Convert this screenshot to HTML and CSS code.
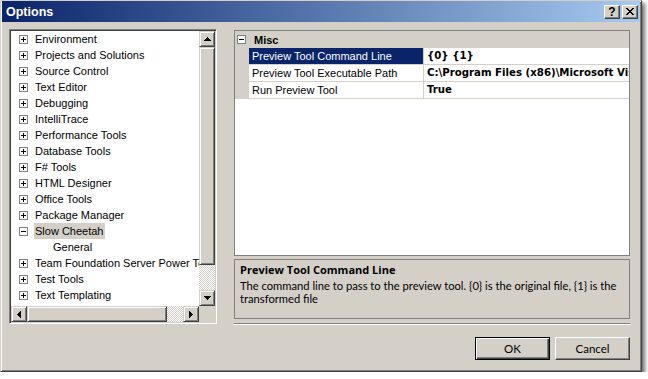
FILE: index.html
```html
<!DOCTYPE html>
<html>
<head>
<meta charset="utf-8">
<link rel="stylesheet" href="styles.css">
</head>
<body>
<div class="window">
  <div class="titlebar">
    <span class="title">Options</span>
    <div class="tbtns">
      <span class="tbtn help">?</span>
      <span class="tbtn close"><svg width="8" height="7" viewBox="0 0 8 7"><path d="M0 0h2v1h1v1h2v-1h1v-1h2v1h-1v1h-1v1h-1v1h1v1h1v1h1v1h-2v-1h-1v-1h-2v1h-1v1h-2v-1h1v-1h1v-1h1v-1h-1v-1h-1v-1h-1z" fill="#000"/></svg></span>
    </div>
  </div>
  <div class="body">
    <div class="tree">
      <div class="tree-main">
        <div class="items">
          <div class="item"><span class="pm plus"></span><span class="lbl">Environment</span></div>
          <div class="item"><span class="pm plus"></span><span class="lbl">Projects and Solutions</span></div>
          <div class="item"><span class="pm plus"></span><span class="lbl">Source Control</span></div>
          <div class="item"><span class="pm plus"></span><span class="lbl">Text Editor</span></div>
          <div class="item"><span class="pm plus"></span><span class="lbl">Debugging</span></div>
          <div class="item"><span class="pm plus"></span><span class="lbl">IntelliTrace</span></div>
          <div class="item"><span class="pm plus"></span><span class="lbl">Performance Tools</span></div>
          <div class="item"><span class="pm plus"></span><span class="lbl">Database Tools</span></div>
          <div class="item"><span class="pm plus"></span><span class="lbl">F# Tools</span></div>
          <div class="item"><span class="pm plus"></span><span class="lbl">HTML Designer</span></div>
          <div class="item"><span class="pm plus"></span><span class="lbl">Office Tools</span></div>
          <div class="item"><span class="pm plus"></span><span class="lbl">Package Manager</span></div>
          <div class="item"><span class="pm minus"></span><span class="lbl sel">Slow Cheetah</span></div>
          <div class="item child"><span class="lbl">General</span></div>
          <div class="item"><span class="pm plus"></span><span class="lbl">Team Foundation Server Power Tools</span></div>
          <div class="item"><span class="pm plus"></span><span class="lbl">Test Tools</span></div>
          <div class="item"><span class="pm plus"></span><span class="lbl">Text Templating</span></div>
          <div class="item"><span class="pm plus"></span><span class="lbl">Windows Forms Designer</span></div>
        </div>
        <div class="vscroll">
          <span class="sbtn"><svg width="7" height="4" viewBox="0 0 7 4"><path d="M3 0h1v1h1v1h1v1h1v1h-7v-1h1v-1h1v-1h1z" fill="#000"/></svg></span>
          <span class="vthumb"></span>
          <span class="vtrack"></span>
          <span class="sbtn"><svg width="7" height="4" viewBox="0 0 7 4"><path d="M0 0h7v1h-1v1h-1v1h-1v1h-1v-1h-1v-1h-1v-1h-1z" fill="#000"/></svg></span>
        </div>
      </div>
      <div class="hrow">
        <span class="sbtn"><svg width="4" height="7" viewBox="0 0 4 7"><path d="M3 0h1v7h-1v-1h-1v-1h-1v-1h-1v-1h1v-1h1v-1h1z" fill="#000"/></svg></span>
        <span class="hthumb"></span>
        <span class="htrack"></span>
        <span class="sbtn"><svg width="4" height="7" viewBox="0 0 4 7"><path d="M0 0h1v1h1v1h1v1h1v1h-1v1h-1v1h-1v1h-1z" fill="#000"/></svg></span>
        <span class="corner"></span>
      </div>
    </div>
    <div class="right">
      <div class="grid">
        <div class="cat"><span class="pm minus catbox"></span><span class="catname">Misc</span></div>
        <div class="prow">
          <span class="margin"></span><span class="pname selname">Preview Tool Command Line</span><span class="pval">{0} {1}</span>
        </div>
        <div class="prow">
          <span class="margin"></span><span class="pname">Preview Tool Executable Path</span><span class="pval">C:\Program Files (x86)\Microsoft Visual Studio 10.0\Common7\IDE\devenv.exe</span>
        </div>
        <div class="prow">
          <span class="margin"></span><span class="pname">Run Preview Tool</span><span class="pval">True</span>
        </div>
      </div>
      <div class="desc">
        <div class="dtitle">Preview Tool Command Line</div>
        <div class="dtext">The command line to pass to the preview tool. {0} is the original file, {1} is the transformed file</div>
      </div>
      <div class="sep"></div>
      <div class="buttons">
        <span class="btn default">OK</span>
        <span class="btn">Cancel</span>
      </div>
    </div>
  </div>
</div>
</body>
</html>
```

FILE: styles.css
```css
html, body {
  margin: 0;
  padding: 0;
  background: #ffffff;
}
.window {
  box-sizing: border-box;
  width: 642px;
  height: 372px;
  background: #d4d0c8;
  border-top: 1px solid #d4d0c8;
  border-left: 1px solid #d4d0c8;
  border-right: 1px solid #404040;
  border-bottom: 1px solid #404040;
  box-shadow: inset 1px 1px #ffffff, inset -1px -1px #808080, 3px 3px 4px rgba(0,0,0,0.55);
  padding: 0 1px 1px 1px;
  display: flex;
  flex-direction: column;
  font-family: "Liberation Sans", Arial, sans-serif;
  font-size: 11px;
  color: #000;
}
.titlebar {
  height: 21px;
  background: linear-gradient(to right, #0a246a, #a6caf0);
  display: flex;
  align-items: center;
  justify-content: space-between;
  padding: 0 2px 0 4px;
}
.title {
  color: #fff;
  font-weight: bold;
  font-size: 12.5px;
}
.tbtns {
  display: flex;
  gap: 2px;
}
.tbtn {
  box-sizing: border-box;
  width: 16px;
  height: 14px;
  background: #d4d0c8;
  border-top: 1px solid #fff;
  border-left: 1px solid #fff;
  border-right: 1px solid #404040;
  border-bottom: 1px solid #404040;
  box-shadow: inset -1px -1px #808080;
  display: flex;
  align-items: center;
  justify-content: center;
  font-weight: bold;
  font-size: 12px;
  line-height: 12px;
}
.body {
  flex: 1;
  display: flex;
  padding: 7px 9px 0 7px;
  gap: 17px;
}
.tree {
  box-sizing: border-box;
  width: 208px;
  height: 295px;
  border-top: 1px solid #808080;
  border-left: 1px solid #808080;
  border-right: 1px solid #fff;
  border-bottom: 1px solid #fff;
  box-shadow: inset 1px 1px #404040, inset -1px -1px #d4d0c8;
  padding: 1px;
  display: flex;
  flex-direction: column;
  background: #fff;
}
.tree-main {
  display: flex;
  height: 275px;
}
.items {
  flex: 1;
  overflow: hidden;
}
.item {
  height: 16px;
  display: flex;
  align-items: center;
  white-space: nowrap;
}
.pm {
  box-sizing: border-box;
  width: 9px;
  height: 9px;
  border: 1px solid #808080;
  background: #fff;
  position: relative;
  flex: none;
  margin-left: 8px;
  margin-right: 6px;
}
.pm::before {
  content: "";
  position: absolute;
  left: 1px;
  top: 3px;
  width: 5px;
  height: 1px;
  background: #000;
}
.plus::after {
  content: "";
  position: absolute;
  left: 3px;
  top: 1px;
  width: 1px;
  height: 5px;
  background: #000;
}
.lbl {
  padding: 0 1px;
  height: 16px;
  line-height: 16px;
}
.lbl.sel {
  background: #d4d0c8;
}
.child .lbl {
  margin-left: 41px;
}
.vscroll {
  width: 16px;
  display: flex;
  flex-direction: column;
}
.sbtn {
  box-sizing: border-box;
  width: 16px;
  height: 16px;
  flex: none;
  background: #d4d0c8;
  border-top: 1px solid #d4d0c8;
  border-left: 1px solid #d4d0c8;
  border-right: 1px solid #404040;
  border-bottom: 1px solid #404040;
  box-shadow: inset 1px 1px #fff, inset -1px -1px #808080;
  display: flex;
  align-items: center;
  justify-content: center;
}
.sbtn svg {
  display: block;
}
.vthumb, .hthumb {
  box-sizing: border-box;
  background: #d4d0c8;
  border-top: 1px solid #d4d0c8;
  border-left: 1px solid #d4d0c8;
  border-right: 1px solid #404040;
  border-bottom: 1px solid #404040;
  box-shadow: inset 1px 1px #fff, inset -1px -1px #808080;
  flex: none;
}
.vthumb {
  height: 218px;
}
.vtrack, .htrack {
  flex: 1;
  background: repeating-conic-gradient(#fff 0 25%, #d4d0c8 0 50%) 0 0 / 2px 2px;
}
.hrow {
  display: flex;
  height: 16px;
}
.hthumb {
  width: 140px;
  height: 16px;
}
.corner {
  width: 16px;
  height: 16px;
  background: #d4d0c8;
  flex: none;
}
.right {
  width: 396px;
  display: flex;
  flex-direction: column;
  padding-top: 1px;
}
.grid {
  box-sizing: border-box;
  height: 226px;
  border: 1px solid #808080;
  background: #fff;
  overflow: hidden;
}
.cat {
  height: 17px;
  background: #d4d0c8;
  display: flex;
  align-items: center;
}
.catbox {
  margin-left: 2px;
  margin-right: 8px;
}
.catname {
  font-weight: bold;
}
.prow {
  display: flex;
  height: 17px;
}
.margin {
  width: 14px;
  flex: none;
  background: #d4d0c8;
}
.pname {
  box-sizing: border-box;
  width: 175px;
  flex: none;
  padding-left: 3px;
  line-height: 16px;
  border-bottom: 1px solid #d4d0c8;
  border-right: 1px solid #d4d0c8;
  white-space: nowrap;
  overflow: hidden;
}
.selname {
  background: #0a246a;
  color: #fff;
}
.pval {
  flex: 1;
  padding-left: 3px;
  line-height: 16px;
  border-bottom: 1px solid #d4d0c8;
  font-family: "DejaVu Sans", sans-serif;
  font-size: 10.2px;
  font-weight: bold;
  white-space: nowrap;
  overflow: hidden;
}
.desc {
  box-sizing: border-box;
  height: 60px;
  margin-top: 3px;
  border: 1px solid #808080;
  padding: 3px 5px 0 5px;
  font-family: Lato, sans-serif;
  font-size: 11px;
  line-height: 13px;
}
.dtitle {
  font-family: "Open Sans", sans-serif;
  font-size: 11px;
  font-weight: bold;
  margin-bottom: 3px;
}
.dtext {
  font-size: 11.2px;
}
.sep {
  height: 0;
  margin-top: 4px;
  border-top: 1px solid #808080;
  border-bottom: 1px solid #fff;
}
.buttons {
  display: flex;
  justify-content: flex-end;
  gap: 5px;
  margin-top: 12px;
}
.btn {
  box-sizing: border-box;
  width: 75px;
  height: 23px;
  border-top: 1px solid #fff;
  border-left: 1px solid #fff;
  border-right: 1px solid #404040;
  border-bottom: 1px solid #404040;
  box-shadow: inset -1px -1px #808080;
  display: flex;
  align-items: center;
  justify-content: center;
  font-family: Lato, sans-serif;
  font-size: 11.5px;
}
.btn.default {
  border: 1px solid #000;
  box-shadow: inset 1px 1px #fff, inset -1px -1px #404040, inset -2px -2px #808080;
}
```
